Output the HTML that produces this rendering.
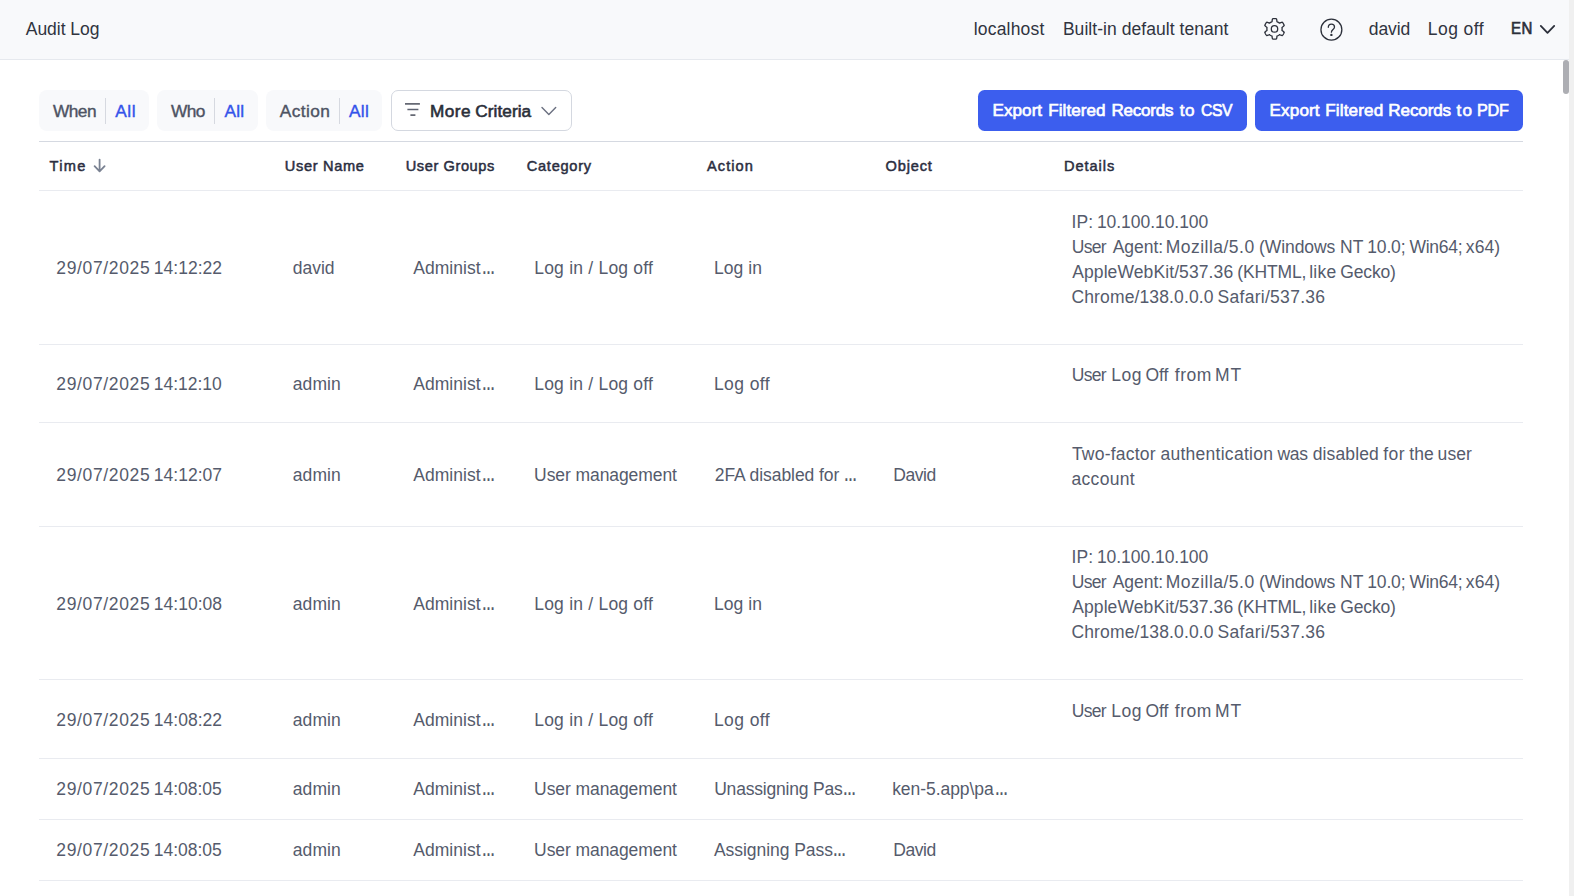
<!doctype html>
<html lang="en">
<head>
<meta charset="utf-8">
<title>Audit Log</title>
<style>
html,body{margin:0;padding:0}
body{width:1574px;height:896px;overflow:hidden;background:#fff;font-family:"Liberation Sans",Arial,sans-serif;position:relative}
.topbar{position:absolute;left:0;top:0;width:1569px;height:59px;background:#f8f9fb;border-bottom:1px solid #e6e9ee}
.ico{position:absolute;display:block;overflow:visible}
.t{position:absolute;white-space:nowrap;line-height:20px;font-size:17.5px;color:#555b6c}
.h-title,.h-txt{color:#30343f}
.h-lang{color:#2b2f3a;-webkit-text-stroke:0.65px #2b2f3a;transform:scaleX(.885);transform-origin:0 50%}
.c-lab{color:#4d5363;-webkit-text-stroke:0.4px #4d5363}
.c-val{color:#3453ea;-webkit-text-stroke:0.4px #3453ea}
.mc{color:#2a2e39;-webkit-text-stroke:0.6px #2a2e39}
.btn-t{color:#fff;-webkit-text-stroke:0.65px #fff}
.th{color:#2b2e3f;-webkit-text-stroke:0.5px #2b2e3f}
.td{color:#555b6c}
.chip{position:absolute;top:90px;height:40.5px;background:#f8f9fb;border-radius:8px}
.vdiv{position:absolute;top:98px;width:1px;height:25.5px;background:#d6d9e0}
.morebtn{position:absolute;left:391px;top:90px;width:178.5px;height:38.5px;border:1px solid #d4d8e0;border-radius:7px;background:#fff}
.btn{position:absolute;top:90px;height:40.5px;border-radius:6.5px;background:#3c5eee}
.hl{position:absolute;left:39px;width:1483.5px;height:1px;background:#e9ebf0}
.hl.top{background:#d5d9e1}
.edge{position:absolute;left:1569px;top:0;width:5px;height:896px;background:#f0f0f0}
.thumb{position:absolute;left:1563px;top:60px;width:5.6px;height:33.8px;border-radius:3px;background:#adaeb3}
.p{position:absolute;top:0;white-space:nowrap;letter-spacing:0}
.e{font-weight:700;display:inline-block;transform:scaleX(.74);transform-origin:0 50%}

</style>
</head>
<body>
<header class="topbar">
<span class="t h-title" style="left:25.75px;top:18.94px;letter-spacing:-0.037px">Audit Log</span>
<span class="t h-txt" style="left:973.75px;top:18.94px;letter-spacing:0.181px">localhost</span>
<span class="t h-txt" style="left:1062.90px;top:18.94px;letter-spacing:0.052px">Built-in default tenant</span>
<span class="t h-txt" style="left:1368.75px;top:18.94px;letter-spacing:-0.100px">david</span>
<span class="t h-txt" style="left:1427.80px;top:18.94px;letter-spacing:0.442px">Log off</span>
<span class="t h-lang" style="left:1510.50px;top:19.11px;font-size:17.0px;letter-spacing:0.400px">EN</span>
<svg class="ico" style="left:1260px;top:14px" width="30" height="30" viewBox="1260 14 30 30" fill="none" stroke="#2c303a" stroke-width="1.3" stroke-linejoin="round"><path d="M1282.10 28.90 L1282.08 28.40 L1282.03 27.91 L1281.99 27.41 L1283.15 26.58 L1284.21 25.60 L1284.02 24.96 L1283.74 24.34 L1283.42 23.75 L1283.06 23.18 L1282.67 22.63 L1282.21 22.14 L1280.83 22.57 L1279.54 23.15 L1279.13 22.87 L1278.72 22.58 L1278.30 22.32 L1277.86 22.08 L1277.41 21.88 L1276.96 21.66 L1276.82 20.25 L1276.50 18.84 L1275.84 18.69 L1275.17 18.62 L1274.50 18.60 L1273.83 18.62 L1273.16 18.69 L1272.50 18.84 L1272.18 20.25 L1272.04 21.66 L1271.59 21.88 L1271.14 22.08 L1270.70 22.32 L1270.28 22.58 L1269.87 22.87 L1269.46 23.15 L1268.17 22.57 L1266.79 22.14 L1266.33 22.63 L1265.94 23.18 L1265.58 23.75 L1265.26 24.34 L1264.98 24.96 L1264.79 25.60 L1265.85 26.58 L1267.01 27.41 L1266.97 27.91 L1266.92 28.40 L1266.90 28.90 L1266.92 29.40 L1266.97 29.89 L1267.01 30.39 L1265.85 31.22 L1264.79 32.20 L1264.98 32.84 L1265.26 33.46 L1265.58 34.05 L1265.94 34.62 L1266.33 35.17 L1266.79 35.66 L1268.17 35.23 L1269.46 34.65 L1269.87 34.93 L1270.28 35.22 L1270.70 35.48 L1271.14 35.72 L1271.59 35.92 L1272.04 36.14 L1272.18 37.55 L1272.50 38.96 L1273.16 39.11 L1273.83 39.18 L1274.50 39.20 L1275.17 39.18 L1275.84 39.11 L1276.50 38.96 L1276.82 37.55 L1276.96 36.14 L1277.41 35.92 L1277.86 35.72 L1278.30 35.48 L1278.72 35.22 L1279.13 34.93 L1279.54 34.65 L1280.83 35.23 L1282.21 35.66 L1282.67 35.17 L1283.06 34.62 L1283.42 34.05 L1283.74 33.46 L1284.02 32.84 L1284.21 32.20 L1283.15 31.22 L1281.99 30.39 L1282.03 29.89 L1282.08 29.40Z"/><circle cx="1274.5" cy="28.9" r="3.2"/></svg>
<svg class="ico" style="left:1316px;top:14px" width="30" height="30" viewBox="1316 14 30 30" fill="none" stroke="#2c303a" stroke-width="1.3" stroke-linecap="round" stroke-linejoin="round"><circle cx="1331.4" cy="29.65" r="10.45"/><path d="M1328.3 27.3c0-2.1 1.4-3.2 3.1-3.2s3.1 1.1 3.1 2.9c0 2.4-3.1 2.6-3.1 5.2"/><circle cx="1331.4" cy="34.9" r="0.55" fill="#30343f"/></svg>
<svg class="ico" style="left:1536px;top:20px" width="24" height="18" viewBox="1536 20 24 18" fill="none" stroke="#2b2f3a" stroke-width="1.8" stroke-linecap="round" stroke-linejoin="round"><path d="M1540.8 25.9l6.7 6.9 6.7-6.9"/></svg>
</header>
<main>
<section class="toolbar">
<div class="chip" style="left:39px;width:110px"></div><i class="vdiv" style="left:105px"></i>
<div class="chip" style="left:157px;width:100.5px"></div><i class="vdiv" style="left:214px"></i>
<div class="chip" style="left:265.5px;width:116px"></div><i class="vdiv" style="left:339px"></i>
<div class="morebtn"></div>
<svg class="ico" style="left:400px;top:98px" width="24" height="24" viewBox="400 98 24 24" fill="none" stroke-width="1.5"><path d="M405 103.9h14.9" stroke="#4b4f5c"/><path d="M407.4 109.5h11" stroke="#5d6270"/><path d="M410.4 115.1h5" stroke="#4b4f5c"/></svg>
<svg class="ico" style="left:536px;top:100px" width="24" height="20" viewBox="536 100 24 20" fill="none" stroke="#6b7080" stroke-width="1.4" stroke-linecap="round" stroke-linejoin="round"><path d="M542 107.4l6.85 7 6.85-7"/></svg>
<div class="btn" style="left:978px;width:268.5px"></div>
<div class="btn" style="left:1255px;width:267.5px"></div>
<span class="t c-lab" style="left:53.00px;top:101.01px;font-size:17.3px;letter-spacing:-0.550px">When</span>
<span class="t c-val" style="left:115.25px;top:101.01px;font-size:17.3px;letter-spacing:0.550px">All</span>
<span class="t c-lab" style="left:171.00px;top:101.01px;font-size:17.3px;letter-spacing:-0.600px">Who</span>
<span class="t c-val" style="left:224.50px;top:101.01px;font-size:17.3px;letter-spacing:0.225px">All</span>
<span class="t c-lab" style="left:279.75px;top:101.01px;font-size:17.3px;letter-spacing:0.420px">Action</span>
<span class="t c-val" style="left:349.00px;top:101.01px;font-size:17.3px;letter-spacing:0.325px">All</span>
<span class="t mc" style="left:429.90px;top:101.04px;font-size:17.2px;letter-spacing:0.483px">More <span class="p" style="left:45.35px;letter-spacing:0.071px">Criteria</span></span>
<span class="t btn-t" style="left:992.60px;top:101.07px;font-size:17.1px;letter-spacing:0.020px">Export <span class="p" style="left:55.70px;letter-spacing:0.050px">Filtered</span> <span class="p" style="left:118.80px;letter-spacing:-0.233px">Records</span> <span class="p" style="left:187.10px;letter-spacing:0.650px">to</span> <span class="p" style="left:208.00px;letter-spacing:-0.408px;transform:scaleX(0.92);transform-origin:0 50%">CSV</span></span>
<span class="t btn-t" style="left:1269.50px;top:101.07px;font-size:17.1px;letter-spacing:0.140px">Export <span class="p" style="left:55.70px;letter-spacing:0.136px">Filtered</span> <span class="p" style="left:118.80px;letter-spacing:-0.133px">Records</span> <span class="p" style="left:187.10px;letter-spacing:1.250px">to</span> <span class="p" style="left:207.50px;letter-spacing:-0.237px;transform:scaleX(0.95);transform-origin:0 50%">PDF</span></span>
</section>
<section class="grid">
<i class="hl top" style="top:141px"></i>
<i class="hl" style="top:190px"></i>
<i class="hl" style="top:344px"></i>
<i class="hl" style="top:422px"></i>
<i class="hl" style="top:526px"></i>
<i class="hl" style="top:679px"></i>
<i class="hl" style="top:758px"></i>
<i class="hl" style="top:819px"></i>
<i class="hl" style="top:880px"></i>
<svg class="ico" style="left:90px;top:156px" width="20" height="20" viewBox="90 156 20 20" fill="none" stroke="#7a8292" stroke-width="1.8" stroke-linecap="round" stroke-linejoin="round"><path d="M99.6 159.6v11.6M94.6 166.2l5 5.2 5-5.2"/></svg>
<span class="t th" style="left:49.50px;top:155.94px;font-size:14.6px;letter-spacing:1.333px">Time</span>
<span class="t th" style="left:284.85px;top:155.94px;font-size:14.6px;letter-spacing:0.656px">User Name</span>
<span class="t th" style="left:405.65px;top:155.94px;font-size:14.6px;letter-spacing:0.595px">User Groups</span>
<span class="t th" style="left:526.70px;top:155.94px;font-size:14.6px;letter-spacing:0.743px">Category</span>
<span class="t th" style="left:707.05px;top:155.94px;font-size:14.6px;letter-spacing:1.030px">Action</span>
<span class="t th" style="left:885.60px;top:155.94px;font-size:14.6px;letter-spacing:0.810px">Object</span>
<span class="t th" style="left:1064.10px;top:155.94px;font-size:14.6px;letter-spacing:0.925px">Details</span>
<span class="t td" style="left:56.30px;top:257.94px;letter-spacing:0.644px">29/07/2025 <span class="p" style="left:97.55px;letter-spacing:0.014px">14:12:22</span></span>
<span class="t td" style="left:292.85px;top:257.94px;letter-spacing:-0.050px">david</span>
<span class="t td" style="left:413.25px;top:257.94px;letter-spacing:0.043px">Administ<span class="p e" style="left:68.40px">…</span></span>
<span class="t td" style="left:534.20px;top:257.94px;letter-spacing:0.220px">Log in / Log off</span>
<span class="t td" style="left:713.90px;top:257.94px;letter-spacing:0.060px">Log in</span>
<span class="t td" style="left:56.30px;top:373.94px;letter-spacing:0.644px">29/07/2025 <span class="p" style="left:97.55px;letter-spacing:-0.021px">14:12:10</span></span>
<span class="t td" style="left:292.75px;top:373.94px;letter-spacing:0.088px">admin</span>
<span class="t td" style="left:413.25px;top:373.94px;letter-spacing:0.043px">Administ<span class="p e" style="left:68.40px">…</span></span>
<span class="t td" style="left:534.20px;top:373.94px;letter-spacing:0.220px">Log in / Log off</span>
<span class="t td" style="left:713.90px;top:373.94px;letter-spacing:0.425px">Log off</span>
<span class="t td" style="left:56.30px;top:464.94px;letter-spacing:0.644px">29/07/2025 <span class="p" style="left:97.55px;letter-spacing:0.014px">14:12:07</span></span>
<span class="t td" style="left:292.75px;top:464.94px;letter-spacing:0.088px">admin</span>
<span class="t td" style="left:413.25px;top:464.94px;letter-spacing:0.043px">Administ<span class="p e" style="left:68.40px">…</span></span>
<span class="t td" style="left:534.10px;top:464.94px;letter-spacing:-0.079px">User management</span>
<span class="t td" style="left:714.75px;top:464.94px;letter-spacing:-0.060px">2FA disabled for <span class="p e" style="left:129.05px">…</span></span>
<span class="t td" style="left:893.20px;top:464.94px;letter-spacing:-0.450px">David</span>
<span class="t td" style="left:56.30px;top:593.94px;letter-spacing:0.644px">29/07/2025 <span class="p" style="left:97.55px;letter-spacing:0.014px">14:10:08</span></span>
<span class="t td" style="left:292.75px;top:593.94px;letter-spacing:0.088px">admin</span>
<span class="t td" style="left:413.25px;top:593.94px;letter-spacing:0.043px">Administ<span class="p e" style="left:68.40px">…</span></span>
<span class="t td" style="left:534.20px;top:593.94px;letter-spacing:0.220px">Log in / Log off</span>
<span class="t td" style="left:713.90px;top:593.94px;letter-spacing:0.060px">Log in</span>
<span class="t td" style="left:56.30px;top:709.94px;letter-spacing:0.644px">29/07/2025 <span class="p" style="left:97.55px;letter-spacing:0.014px">14:08:22</span></span>
<span class="t td" style="left:292.75px;top:709.94px;letter-spacing:0.088px">admin</span>
<span class="t td" style="left:413.25px;top:709.94px;letter-spacing:0.043px">Administ<span class="p e" style="left:68.40px">…</span></span>
<span class="t td" style="left:534.20px;top:709.94px;letter-spacing:0.220px">Log in / Log off</span>
<span class="t td" style="left:713.90px;top:709.94px;letter-spacing:0.425px">Log off</span>
<span class="t td" style="left:56.30px;top:778.94px;letter-spacing:0.644px">29/07/2025 <span class="p" style="left:97.55px;letter-spacing:-0.021px">14:08:05</span></span>
<span class="t td" style="left:292.75px;top:778.94px;letter-spacing:0.088px">admin</span>
<span class="t td" style="left:413.25px;top:778.94px;letter-spacing:0.043px">Administ<span class="p e" style="left:68.40px">…</span></span>
<span class="t td" style="left:534.10px;top:778.94px;letter-spacing:-0.079px">User management</span>
<span class="t td" style="left:714.15px;top:778.94px;letter-spacing:-0.186px">Unassigning Pas<span class="p e" style="left:129.25px">…</span></span>
<span class="t td" style="left:892.15px;top:778.94px;letter-spacing:-0.055px">ken-5.app\pa<span class="p e" style="left:102.75px">…</span></span>
<span class="t td" style="left:56.30px;top:839.94px;letter-spacing:0.644px">29/07/2025 <span class="p" style="left:97.55px;letter-spacing:-0.021px">14:08:05</span></span>
<span class="t td" style="left:292.75px;top:839.94px;letter-spacing:0.088px">admin</span>
<span class="t td" style="left:413.25px;top:839.94px;letter-spacing:0.043px">Administ<span class="p e" style="left:68.40px">…</span></span>
<span class="t td" style="left:534.10px;top:839.94px;letter-spacing:-0.079px">User management</span>
<span class="t td" style="left:713.90px;top:839.94px;letter-spacing:-0.046px">Assigning Pass<span class="p e" style="left:119.50px">…</span></span>
<span class="t td" style="left:893.20px;top:839.94px;letter-spacing:-0.450px">David</span>
<span class="t td" style="left:1071.40px;top:211.94px;letter-spacing:0.175px">IP: <span class="p" style="left:25.55px;letter-spacing:-0.050px">10.100.10.100</span></span>
<span class="t td" style="left:1071.65px;top:236.94px;letter-spacing:-0.633px">User <span class="p" style="left:41.05px;letter-spacing:-0.020px">Agent:</span> <span class="p" style="left:94.05px;letter-spacing:0.480px">Mozilla/5.0</span> <span class="p" style="left:187.25px;letter-spacing:-0.050px">(Windows</span> <span class="p" style="left:268.35px;letter-spacing:0.100px">NT</span> <span class="p" style="left:295.60px;letter-spacing:-0.150px">10.0;</span> <span class="p" style="left:337.75px;letter-spacing:-0.240px">Win64;</span> <span class="p" style="left:394.20px;letter-spacing:0.083px">x64)</span></span>
<span class="t td" style="left:1072.20px;top:261.94px;letter-spacing:0.100px">AppleWebKit/537.36 <span class="p" style="left:165.10px;letter-spacing:-0.133px">(KHTML,</span> <span class="p" style="left:236.95px;letter-spacing:0.317px">like</span> <span class="p" style="left:268.05px;letter-spacing:-0.140px">Gecko)</span></span>
<span class="t td" style="left:1071.50px;top:286.94px;letter-spacing:0.127px">Chrome/138.0.0.0 <span class="p" style="left:146.05px;letter-spacing:0.283px">Safari/537.36</span></span>
<span class="t td" style="left:1071.65px;top:364.94px;letter-spacing:-0.633px">User <span class="p" style="left:39.55px;letter-spacing:0.550px">Log</span> <span class="p" style="left:73.80px;letter-spacing:-0.075px">Off</span> <span class="p" style="left:103.10px;letter-spacing:0.550px">from</span> <span class="p" style="left:143.45px;letter-spacing:0.950px">MT</span></span>
<span class="t td" style="left:1071.95px;top:443.94px;letter-spacing:0.206px">Two-factor <span class="p" style="left:88.50px;letter-spacing:0.269px">authentication</span> <span class="p" style="left:205.45px;letter-spacing:-0.200px">was</span> <span class="p" style="left:240.70px;letter-spacing:0.136px">disabled</span> <span class="p" style="left:311.30px;letter-spacing:0.450px">for</span> <span class="p" style="left:337.30px;letter-spacing:0.125px">the</span> <span class="p" style="left:365.65px;letter-spacing:0.083px">user</span></span>
<span class="t td" style="left:1071.55px;top:468.94px;letter-spacing:0.283px">account</span>
<span class="t td" style="left:1071.40px;top:546.94px;letter-spacing:0.175px">IP: <span class="p" style="left:25.55px;letter-spacing:-0.050px">10.100.10.100</span></span>
<span class="t td" style="left:1071.65px;top:571.94px;letter-spacing:-0.633px">User <span class="p" style="left:41.05px;letter-spacing:-0.020px">Agent:</span> <span class="p" style="left:94.05px;letter-spacing:0.480px">Mozilla/5.0</span> <span class="p" style="left:187.25px;letter-spacing:-0.050px">(Windows</span> <span class="p" style="left:268.35px;letter-spacing:0.100px">NT</span> <span class="p" style="left:295.60px;letter-spacing:-0.150px">10.0;</span> <span class="p" style="left:337.75px;letter-spacing:-0.240px">Win64;</span> <span class="p" style="left:394.20px;letter-spacing:0.083px">x64)</span></span>
<span class="t td" style="left:1072.20px;top:596.94px;letter-spacing:0.100px">AppleWebKit/537.36 <span class="p" style="left:165.10px;letter-spacing:-0.133px">(KHTML,</span> <span class="p" style="left:236.95px;letter-spacing:0.317px">like</span> <span class="p" style="left:268.05px;letter-spacing:-0.140px">Gecko)</span></span>
<span class="t td" style="left:1071.50px;top:621.94px;letter-spacing:0.127px">Chrome/138.0.0.0 <span class="p" style="left:146.05px;letter-spacing:0.283px">Safari/537.36</span></span>
<span class="t td" style="left:1071.65px;top:700.94px;letter-spacing:-0.633px">User <span class="p" style="left:39.55px;letter-spacing:0.550px">Log</span> <span class="p" style="left:73.80px;letter-spacing:-0.075px">Off</span> <span class="p" style="left:103.10px;letter-spacing:0.550px">from</span> <span class="p" style="left:143.45px;letter-spacing:0.950px">MT</span></span>
</section>
</main>
<div class="edge"></div>
<div class="thumb"></div>
</body>
</html>
